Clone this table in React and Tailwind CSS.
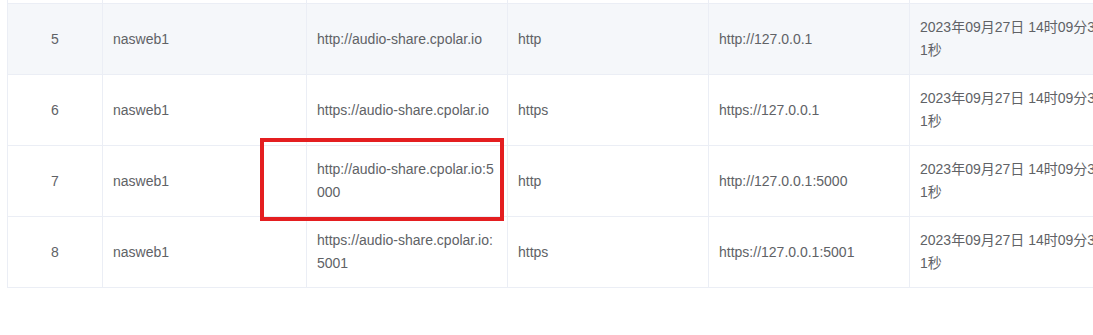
import React from 'react';

const rows = [
  { id: 5, name: 'nasweb1', url: 'http://audio-share.cpolar.io', proto: 'http', local: 'http://127.0.0.1', time: '2023年09月27日 14时09分31秒', striped: true },
  { id: 6, name: 'nasweb1', url: 'https://audio-share.cpolar.io', proto: 'https', local: 'https://127.0.0.1', time: '2023年09月27日 14时09分31秒' },
  { id: 7, name: 'nasweb1', url: 'http://audio-share.cpolar.io:5000', proto: 'http', local: 'http://127.0.0.1:5000', time: '2023年09月27日 14时09分31秒' },
  { id: 8, name: 'nasweb1', url: 'https://audio-share.cpolar.io:5001', proto: 'https', local: 'https://127.0.0.1:5001', time: '2023年09月27日 14时09分31秒' },
];

const widths = ['w-[95px]', 'w-[204px]', 'w-[201px]', 'w-[201px]', 'w-[201px]', 'w-[201px]'];

const Cell = ({ width, center, children }) => (
  <div className={`${width} shrink-0 flex items-center border-r border-[#ebeef5] py-3`}>
    <div className={`w-full px-[10px] leading-[23px] break-all ${center ? 'text-center' : ''}`}>
      {children}
    </div>
  </div>
);

export default function App() {
  return (
    <div
      className="relative w-[1093px] h-[335px] overflow-hidden bg-white text-[14px] text-[#606266]"
      style={{ fontFamily: '"Liberation Sans", Arial, "Noto Sans CJK SC", sans-serif' }}
    >
      <div className="ml-[7px] w-[1300px] border-l border-[#ebeef5]">
        {/* tail of the row scrolled above */}
        <div className="flex h-[4px] border-b border-[#ebeef5]">
          {widths.map((w, i) => (
            <div key={i} className={`${w} shrink-0 border-r border-[#ebeef5]`} />
          ))}
        </div>

        {rows.map((r) => (
          <div
            key={r.id}
            className={`flex min-h-[71px] border-b border-[#ebeef5] ${r.striped ? 'bg-[#f5f7fa]' : 'bg-white'}`}
          >
            <Cell width={widths[0]} center>{r.id}</Cell>
            <Cell width={widths[1]}>{r.name}</Cell>
            <Cell width={widths[2]}>{r.url}</Cell>
            <Cell width={widths[3]}>{r.proto}</Cell>
            <Cell width={widths[4]}>{r.local}</Cell>
            <Cell width={widths[5]}>{r.time}</Cell>
          </div>
        ))}
      </div>

      {/* highlight box */}
      <div className="absolute left-[260px] top-[138px] w-[244px] h-[83px] border-4 border-[#e41e20]" />
    </div>
  );
}
